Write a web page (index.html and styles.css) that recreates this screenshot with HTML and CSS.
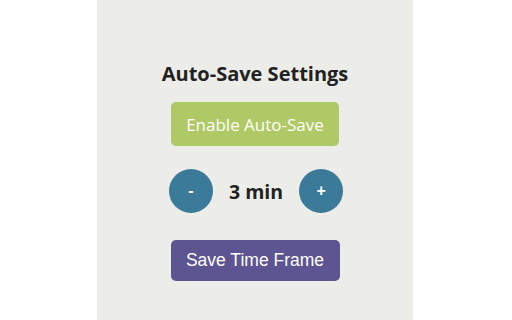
FILE: index.html
```html
<!DOCTYPE html>
<html lang="en">
<head>
  <meta charset="UTF-8"/>
  <title>Auto-Save Settings</title>
  <link rel="stylesheet" href="styles.css">
</head>
<body>
  <div class="panel">
    <h2 class="title">Auto-Save Settings</h2>
    <button class="enable-btn" id="enableBtn">Enable Auto-Save</button>
    <div class="time-row">
      <button class="round-btn" id="minusBtn">-</button>
      <span class="time-value" id="timeValue">3 min</span>
      <button class="round-btn" id="plusBtn">+</button>
    </div>
    <button class="save-btn" id="saveBtn">Save Time Frame</button>
  </div>
</body>
</html>
```

FILE: styles.css
```css
* {
  margin: 0;
  padding: 0;
  box-sizing: border-box;
}
html, body {
  height: 100%;
}
body {
  background: #ffffff;
  display: flex;
  justify-content: center;
}
.panel {
  width: 316px;
  height: 100%;
  background-color: #ecece8;
  display: flex;
  flex-direction: column;
  align-items: center;
  padding-top: 60px;
  margin-right: 2px;
}
.title {
  font-family: 'Open Sans', sans-serif;
  font-size: 20px;
  font-weight: bold;
  color: #222;
  line-height: 28px;
}
button {
  border: none;
  color: white;
  cursor: pointer;
}
.enable-btn {
  margin-top: 14px;
  width: 168px;
  height: 44px;
  background: #aec965;
  border-radius: 5px;
  font-family: 'Open Sans', sans-serif;
  font-size: 17px;
}
.time-row {
  margin-top: 23px;
  display: flex;
  align-items: center;
  gap: 16px;
  padding-left: 2px;
}
.round-btn {
  width: 44px;
  height: 44px;
  border-radius: 50%;
  background: #3b7a99;
  font-family: 'Liberation Sans', Arial, sans-serif;
  font-size: 16px;
  font-weight: bold;
}
.time-value {
  font-family: 'Open Sans', sans-serif;
  font-size: 19.5px;
  font-weight: bold;
  color: #222;
}
.save-btn {
  margin-top: 27px;
  width: 169px;
  height: 41px;
  background: #5d5591;
  border-radius: 5px;
  font-family: 'Liberation Sans', Arial, sans-serif;
  font-size: 17.5px;
}
```
